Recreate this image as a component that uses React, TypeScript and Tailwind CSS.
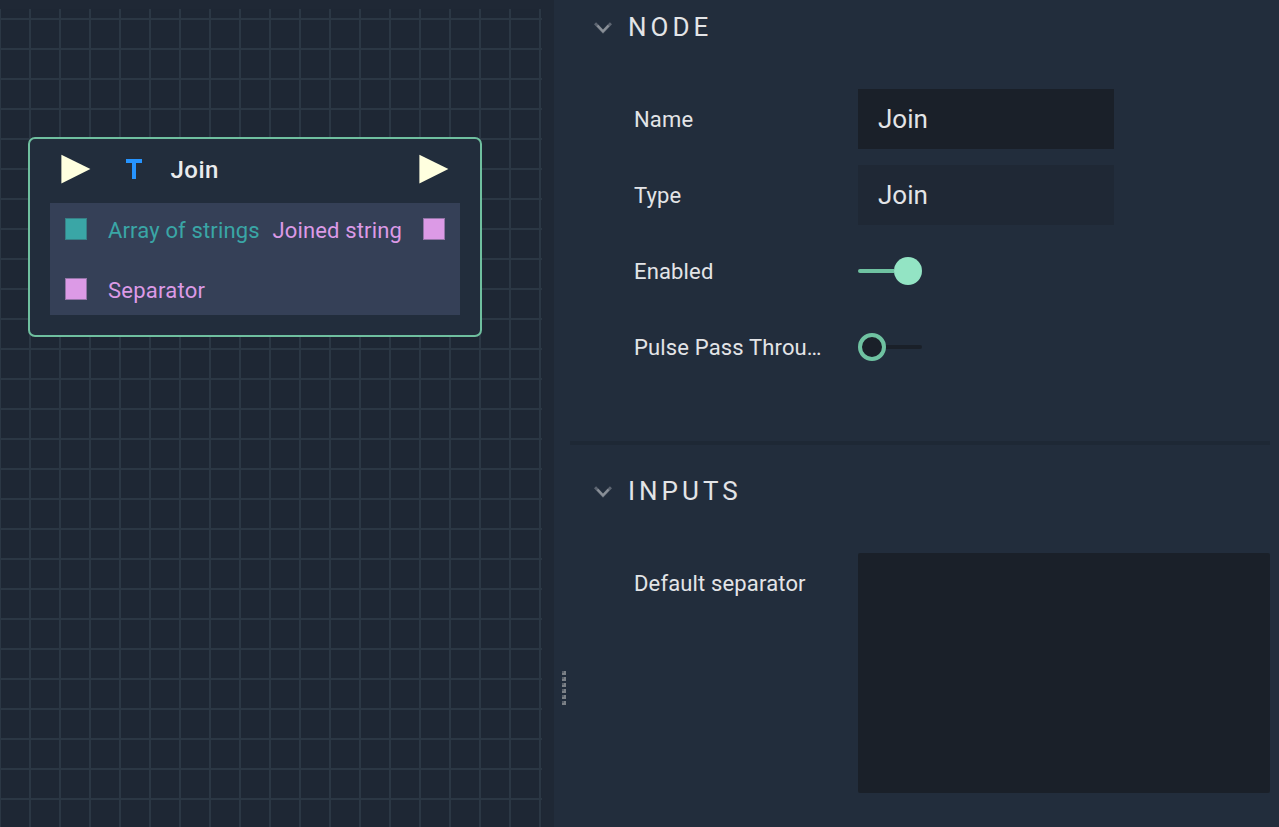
import type { ReactNode } from "react";

function Triangle() {
  return (
    <svg width="32" height="32" viewBox="0 0 32 32" className="shrink-0">
      <path d="M2.4 1.8 31.4 16 2.4 30.4Z" fill="#ffffdf" />
    </svg>
  );
}

function Chevron() {
  return (
    <svg width="18" height="12" viewBox="0 0 18 12" fill="none" className="shrink-0">
      <path d="M1 1.2 9 9.6 17 1.2" stroke="#5d6571" strokeWidth="3" />
      <path d="M3.5 3.6 9 9.4 14.5 3.6" stroke="#898f97" strokeWidth="2.2" />
    </svg>
  );
}

function GraphNode() {
  return (
    <section className="absolute top-[137px] left-[28px] h-[200px] w-[454px] rounded-[7px] border-2 border-[#6fbf9f] bg-[#222d3c] px-5">
      <header className="flex h-16 items-center pr-[11px] pb-1 pl-[9px]">
        <Triangle />
        <svg width="16" height="20" viewBox="0 0 16 20" className="ml-[35px]" fill="#2694ff">
          <path d="M0 0H16V4H10V20H6V4H0Z" />
        </svg>
        <h1 className="ml-[28.5px] flex-1 pt-[2px] text-[24px] leading-8 font-medium tracking-[0.5px] text-[#eaebed]">Join</h1>
        <Triangle />
      </header>
      <div className="flex h-28 justify-between bg-[#354057] text-[22px] tracking-[0.15px]">
        <div className="flex flex-col pl-[15px]">
          <div className="flex h-[52px] items-center text-[#3aa6a6]">
            <i className="mr-[21px] size-[22px] border border-[#378086] bg-[#3aa6a6]" />
            <span className="pt-[2px]">Array of strings</span>
          </div>
          <div className="mt-2 flex h-[52px] items-center text-[#dc9ae6]">
            <i className="mr-[21px] size-[22px] border border-[#9475a8] bg-[#dc9ae6]" />
            <span className="pt-[2px] tracking-[0.25px]">Separator</span>
          </div>
        </div>
        <div className="flex h-[52px] items-center pr-[15px] text-[#dc9ae6]">
          <span className="pt-[2px]">Joined string</span>
          <i className="ml-[21px] size-[22px] border border-[#9475a8] bg-[#dc9ae6]" />
        </div>
      </div>
    </section>
  );
}

function Row({ label, children }: { label: string; children: ReactNode }) {
  return (
    <div className="flex h-[60px] items-center">
      <label className="w-[192px] shrink-0 truncate text-[22px] tracking-[0.15px]">{label}</label>
      <div className="ml-8">{children}</div>
    </div>
  );
}

function Heading({ children }: { children: ReactNode }) {
  return (
    <h2 className="flex h-8 items-center gap-4 pl-10 text-[26px] leading-8 font-normal tracking-[4px]">
      <Chevron />
      <span className="-mt-[2px]">{children}</span>
    </h2>
  );
}

export default function App() {
  return (
    <main className="flex h-[827px] w-[1279px] overflow-hidden bg-[#222d3c] font-['Roboto',sans-serif] text-[#e3e4e7]">
      <div className="relative w-[554px] shrink-0 bg-[#1f2835] pt-[9px]">
        <div className="h-[818px] w-[542px] bg-[#1e2734] bg-[linear-gradient(to_right,#2b3744_2px,transparent_2px),linear-gradient(#2b3744_2px,transparent_2px)] [background-position:-1px_9px] [background-size:30px_30px]" />
        <GraphNode />
      </div>
      <div className="flex w-4 shrink-0 flex-col gap-[2px] pt-[671px] pl-2">
        {[0, 1, 2, 3, 4, 5].map((dot) => (
          <i key={dot} className="size-1 bg-[#7b8086]">
            <b className="block size-[2px] bg-[#5a616b]" />
          </i>
        ))}
      </div>
      <aside className="w-[700px] shrink-0">
        <section className="h-[441px] pt-3">
          <div className="-ml-4">
            <Heading>NODE</Heading>
          </div>
          <div className="mt-[45px] flex flex-col gap-4 pl-16">
            <Row label="Name">
              <div className="flex h-[60px] w-64 items-center bg-[#1a2029] pl-5 text-[26px]">Join</div>
            </Row>
            <Row label="Type">
              <div className="flex h-[60px] w-64 items-center bg-[#1f2835] pl-5 text-[26px]">Join</div>
            </Row>
            <Row label="Enabled">
              <div className="flex w-16 items-center">
                <i className="h-1 flex-1 rounded-l-full bg-[#6fc2a1]" />
                <i className="size-7 rounded-full bg-[#93e4c4]" />
              </div>
            </Row>
            <Row label="Pulse Pass Through">
              <div className="flex w-16 items-center">
                <i className="size-7 rounded-full border-4 border-[#6fc2a1] bg-[#1a2029]" />
                <i className="h-1 flex-1 rounded-r-full bg-[#1a2029]" />
              </div>
            </Row>
          </div>
        </section>
        <hr className="h-1 border-0 bg-[#1e2835]" />
        <section className="pt-[31px]">
          <div className="-ml-4">
            <Heading>INPUTS</Heading>
          </div>
          <div className="mt-[45px] flex pl-16">
            <label className="flex h-[60px] w-[224px] items-center text-[22px] tracking-[0.15px]">Default separator</label>
            <div className="h-[240px] flex-1 rounded-[2px] bg-[#1a2029]" />
          </div>
        </section>
      </aside>
    </main>
  );
}
